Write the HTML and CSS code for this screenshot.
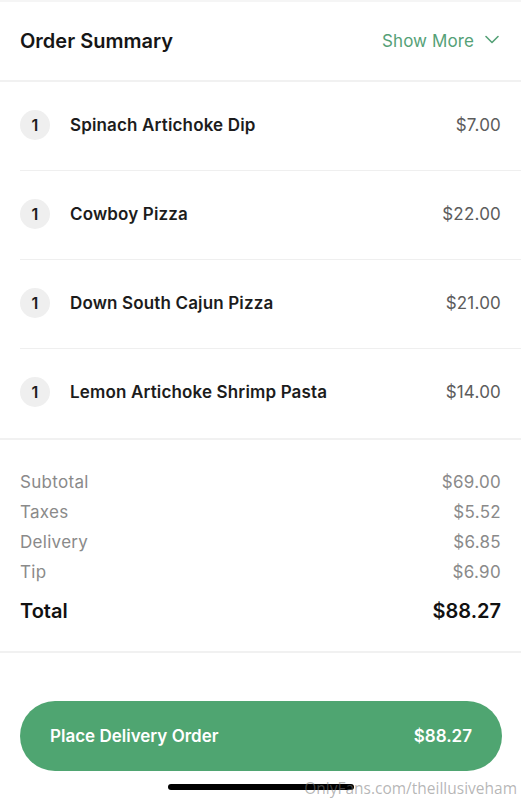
FILE: index.html
```html
<!DOCTYPE html>
<html>
<head>
<meta charset="utf-8">
<link rel="stylesheet" href="styles.css">
</head>
<body>
<div class="page">
  <div class="topstrip"></div>
  <header class="header">
    <h1 class="title">Order Summary</h1>
    <div class="more">Show More
      <svg class="chev" width="14" height="9" viewBox="0 0 14 9"><path d="M1 1.5 L7 7.5 L13 1.5" fill="none" stroke="currentColor" stroke-width="1.6" stroke-linecap="round" stroke-linejoin="round"/></svg>
    </div>
  </header>
  <section class="items">
    <div class="item"><span class="qty">1</span><span class="name">Spinach Artichoke Dip</span><span class="price">$7.00</span></div>
    <div class="item"><span class="qty">1</span><span class="name">Cowboy Pizza</span><span class="price">$22.00</span></div>
    <div class="item"><span class="qty">1</span><span class="name">Down South Cajun Pizza</span><span class="price">$21.00</span></div>
    <div class="item last"><span class="qty">1</span><span class="name">Lemon Artichoke Shrimp Pasta</span><span class="price">$14.00</span></div>
  </section>
  <section class="totals">
    <div class="trow"><span>Subtotal</span><span>$69.00</span></div>
    <div class="trow"><span>Taxes</span><span>$5.52</span></div>
    <div class="trow"><span>Delivery</span><span>$6.85</span></div>
    <div class="trow"><span>Tip</span><span>$6.90</span></div>
    <div class="trow total"><span>Total</span><span>$88.27</span></div>
  </section>
  <section class="action">
    <button class="place"><span>Place Delivery Order</span><span>$88.27</span></button>
  </section>
  <div class="homebar"></div>
  <div class="watermark">OnlyFans.com/theillusiveham</div>
</div>
</body>
</html>
```
FILE: styles.css
```css
* { box-sizing: border-box; }
html, body { margin: 0; padding: 0; background: #fff; }
body { font-family: Inter, "Noto Sans", sans-serif; color: #1a1a1a; }
.page { position: relative; width: 521px; height: 800px; overflow: hidden; }
.topstrip { height: 2px; background: #f5f5f5; }
.header {
  height: 80px;
  display: flex; align-items: center; justify-content: space-between;
  padding: 0 20px 0 20px;
  border-bottom: 2px solid #f1f1f1;
}
.title { margin: 0; font-size: 20px; font-weight: 600; letter-spacing: 0; color: #161616; }
.more { display: flex; align-items: center; gap: 11px; color: #55a177; font-size: 17px; letter-spacing: 0.1px; padding-right: 2px; }
.chev { margin-top: -3px; }
.items { padding: 0; }
.item {
  height: 89px; margin-left: 20px; padding-right: 20px; padding-bottom: 3px;
  display: flex; align-items: center;
  border-bottom: 1px solid #efefef;
}
.item.last { border-bottom: none; height: 89px; }
.qty {
  width: 30px; height: 30px; border-radius: 50%; background: #efefef;
  display: flex; align-items: center; justify-content: center;
  font-size: 16px; font-weight: 600; color: #1c1c1c; flex: none;
}
.name { margin-left: 20px; flex: 1; font-size: 17px; font-weight: 600; letter-spacing: 0.15px; color: #1c1c1c; }
.price { font-size: 17px; letter-spacing: 0.2px; color: #5c5c5c; }
.totals {
  border-top: 2px solid #f1f1f1;
  border-bottom: 2px solid #f1f1f1;
  padding: 27px 20px 25px 20px;
}
.trow { display: flex; justify-content: space-between; line-height: 30px; font-size: 17px; letter-spacing: 0.3px; color: #8a8a8a; }
.trow.total { margin-top: 9px; font-size: 20px; font-weight: 600; letter-spacing: 0; color: #111; }
.action { padding: 48px 19px 0 20px; }
.place {
  width: 100%; height: 70px; border: none; border-radius: 35px;
  background: #4fa571; color: #fff;
  display: flex; align-items: center; justify-content: space-between;
  padding: 0 30px 0 30px;
  font-family: Inter, "Noto Sans", sans-serif; font-size: 17px; font-weight: 600;
}
.homebar { position: absolute; left: 168px; top: 784px; width: 186px; height: 6px; border-radius: 3px; background: #000; }
.watermark { position: absolute; right: 4px; top: 777px; font-family: "Open Sans", sans-serif; font-size: 15.5px; color: rgba(120,120,120,0.55); }
```
